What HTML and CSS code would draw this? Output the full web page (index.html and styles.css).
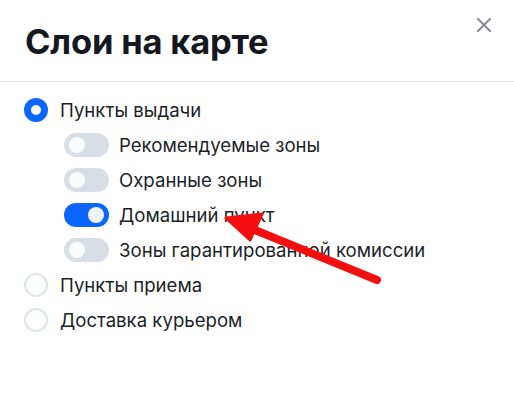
FILE: index.html
```html
<!DOCTYPE html>
<html lang="ru">
<head>
<meta charset="utf-8">
<link rel="stylesheet" href="styles.css">
</head>
<body>
<div class="panel">
  <header class="head">
    <h1 class="title">Слои на карте</h1>
    <button class="close" aria-label="Закрыть">
      <svg width="16" height="16" viewBox="0 0 16 16"><path d="M2 2L14 14M14 2L2 14" stroke="#8a9099" stroke-width="2.2" stroke-linecap="round"/></svg>
    </button>
  </header>
  <div class="list">
    <div class="row"><span class="radio on"></span><span class="label">Пункты выдачи</span></div>
    <div class="row sub"><span class="toggle"></span><span class="label">Рекомендуемые зоны</span></div>
    <div class="row sub"><span class="toggle"></span><span class="label">Охранные зоны</span></div>
    <div class="row sub"><span class="toggle on"></span><span class="label">Домашний пункт</span></div>
    <div class="row sub"><span class="toggle"></span><span class="label">Зоны гарантированной комиссии</span></div>
    <div class="row"><span class="radio"></span><span class="label">Пункты приема</span></div>
    <div class="row"><span class="radio"></span><span class="label">Доставка курьером</span></div>
  </div>
  <svg class="arrow" width="514" height="411" viewBox="0 0 514 411">
    <line x1="377" y1="280" x2="250" y2="228" stroke="#f40f0f" stroke-width="8" stroke-linecap="round"/>
    <polygon points="226,218 262,214 250,240" fill="#f40f0f" stroke="#f40f0f" stroke-width="3" stroke-linejoin="round"/>
  </svg>
</div>
</body>
</html>
```
FILE: styles.css
```css
html, body { margin: 0; padding: 0; background: #fff; }
body { font-family: Inter, "Noto Sans", sans-serif; color: #1b1f29; }
.panel { position: relative; width: 514px; height: 411px; overflow: hidden; }
.head { height: 81px; border-bottom: 1px solid #e3e8ee; display: flex; align-items: flex-start; justify-content: space-between; padding: 0 22px 0 25px; }
.title { margin: 22px 0 0; font-size: 34.5px; font-weight: 700; letter-spacing: -0.2px; line-height: 40px; color: #141821; }
.close { margin-top: 17px; border: 0; background: none; padding: 0; width: 16px; height: 16px; }
.list { padding: 10px 0 0 24px; }
.row { height: 35px; display: flex; align-items: center; }
.row.sub { padding-left: 40px; }
.label { font-size: 18.6px; line-height: 22px; }
.radio { width: 24px; height: 24px; box-sizing: border-box; border-radius: 50%; border: 2px solid #dfe4eb; margin-right: 12px; flex: none; }
.radio.on { border: 7px solid #0a66ff; }
.toggle { position: relative; width: 45px; height: 24px; border-radius: 12px; background: #d8dee6; margin-right: 10px; flex: none; }
.toggle::after { content: ""; position: absolute; left: 5px; top: 4px; width: 16px; height: 16px; border-radius: 50%; background: #fafbfc; }
.toggle.on { background: #0a66ff; }
.toggle.on::after { left: 24px; background: #eef3ff; }
.arrow { position: absolute; left: 0; top: 0; pointer-events: none; }
```
